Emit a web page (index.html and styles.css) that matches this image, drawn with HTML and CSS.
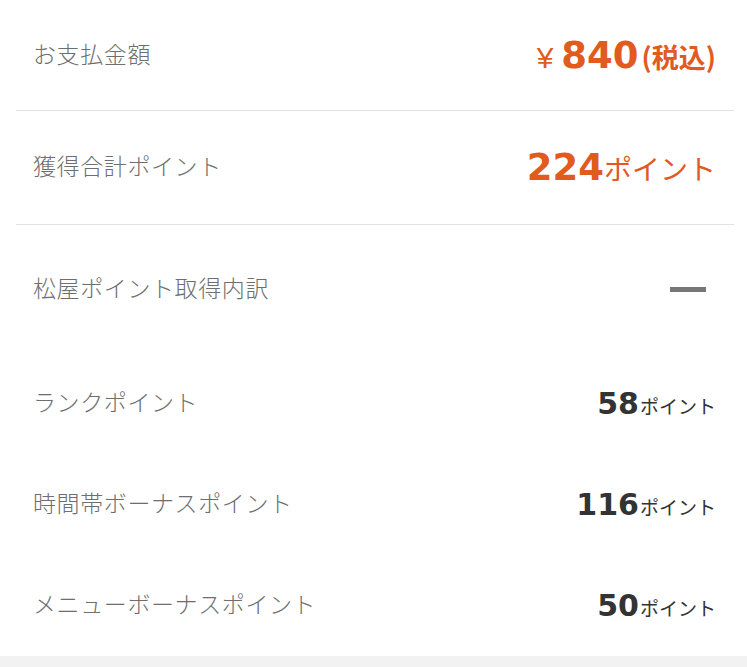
FILE: index.html
```html
<!DOCTYPE html>
<html lang="ja">
<head>
    <meta charset="UTF-8">
    <meta name="viewport" content="width=device-width, initial-scale=1.0">
    <title>お支払金額</title>
    <link rel="stylesheet" href="styles.css">
</head>
<body>
    <div class="summary">
        <div class="row row-total">
            <span class="label">お支払金額</span>
            <span class="value accent">
                <span class="yen">¥</span><span class="num">840</span><span class="tax">(税込)</span>
            </span>
        </div>
        <div class="row row-points">
            <span class="label">獲得合計ポイント</span>
            <span class="value accent">
                <span class="num">224</span><span class="unit">ポイント</span>
            </span>
        </div>
        <div class="breakdown">
            <div class="row row-head">
                <span class="label">松屋ポイント取得内訳</span>
                <span class="minus"></span>
            </div>
            <div class="row row-item">
                <span class="label">ランクポイント</span>
                <span class="value small">
                    <span class="num">58</span><span class="unit">ポイント</span>
                </span>
            </div>
            <div class="row row-item">
                <span class="label">時間帯ボーナスポイント</span>
                <span class="value small">
                    <span class="num">116</span><span class="unit">ポイント</span>
                </span>
            </div>
            <div class="row row-item">
                <span class="label">メニューボーナスポイント</span>
                <span class="value small">
                    <span class="num">50</span><span class="unit">ポイント</span>
                </span>
            </div>
        </div>
    </div>
    <div class="footer"></div>
</body>
</html>
```

FILE: styles.css
```css
body {
    margin: 0;
    padding: 0;
    background-color: #fff;
    font-family: "Noto Sans CJK JP", "Liberation Sans", sans-serif;
    color: #333;
}

.summary {
    margin: 0 13px 0 16px;
}

.row {
    display: flex;
    align-items: center;
    justify-content: space-between;
    padding: 0 18px 0 17px;
}

.row-total {
    height: 110px;
    border-bottom: 1px solid #e2e2e2;
}

.row-points {
    height: 113px;
    border-bottom: 1px solid #e2e2e2;
}

.row-head {
    height: 128px;
}

.row-item {
    height: 101px;
}

.label {
    font-size: 23px;
    line-height: 1;
    font-weight: 300;
    color: #6e6e6e;
    letter-spacing: 0.6px;
    margin-bottom: 4px;
}

.value {
    display: flex;
    align-items: baseline;
    white-space: nowrap;
    line-height: 1;
}

.accent {
    color: #e15a1e;
}

.num {
    font-family: "DejaVu Sans", sans-serif;
    font-weight: bold;
}

.accent .num {
    font-size: 37px;
}

.yen {
    font-family: "Liberation Sans", sans-serif;
    font-size: 30px;
    margin-right: 8px;
}

.tax {
    font-size: 27px;
    font-weight: bold;
    margin-left: 3px;
}

.accent .unit {
    font-size: 28px;
    font-weight: 400;
}

.small {
    color: #333;
}

.small .num {
    font-size: 30px;
}

.small .unit {
    font-size: 19px;
    font-weight: 400;
    margin-left: 1px;
}

.minus {
    display: block;
    width: 36px;
    height: 5px;
    background-color: #777;
    margin-right: 10px;
}

.footer {
    height: 12px;
    background-color: #f2f2f2;
}
```
